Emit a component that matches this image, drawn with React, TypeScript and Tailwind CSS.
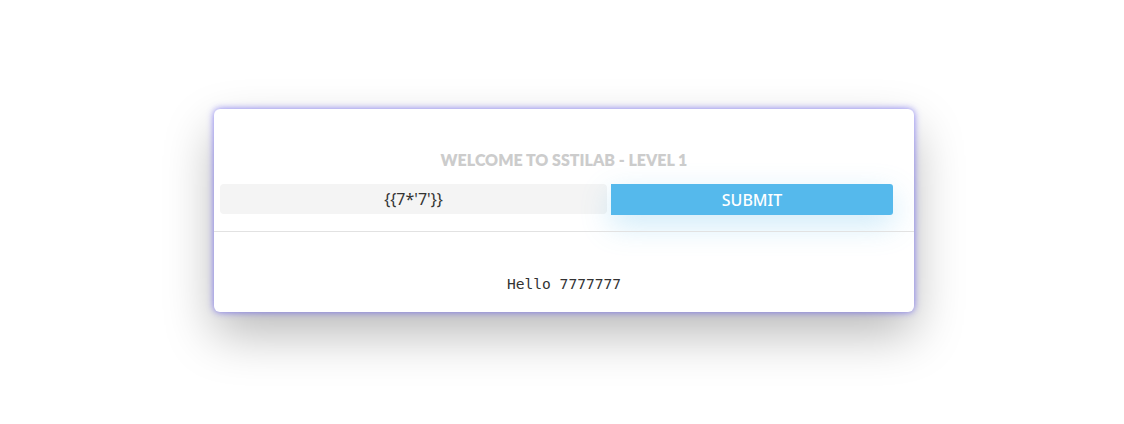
import React, { useState } from 'react';

const App: React.FC = () => {
  const [payload, setPayload] = useState("{{7*'7'}}");

  return (
    <div className="w-[1124px] h-[424px] bg-white flex justify-center pt-[109px] pl-[4px]">
      <div className="w-[700px] h-[203px] bg-white rounded-md shadow-[0_0_7px_rgba(100,90,240,0.8),0_22px_50px_rgba(0,0,0,0.28)] flex flex-col">
        <h1 className="mt-[41px] text-center text-[16px] leading-5 font-extrabold text-[#cccccc] font-['Lato','Noto_Sans',sans-serif]">
          WELCOME TO SSTILAB - LEVEL 1
        </h1>
        <form
          className="mt-[14px] ml-[6px] mr-[21px] flex gap-[4px] h-[31px]"
          onSubmit={(e) => e.preventDefault()}
        >
          <input
            value={payload}
            onChange={(e) => setPayload(e.target.value)}
            className="w-[387px] h-[30px] bg-[#f4f4f4] rounded-sm text-center text-[16px] text-[#333] font-['Noto_Sans',sans-serif] outline-none"
          />
          <button
            type="submit"
            className="flex-1 h-[31px] bg-[#55b9ec] rounded-r-[3px] text-white text-[16px] font-medium font-['Noto_Sans',sans-serif] shadow-[0_10px_30px_rgba(85,185,236,0.3)]"
          >
            SUBMIT
          </button>
        </form>
        <div className="mt-[16px] border-t border-[#e2e2e2]" />
        <div className="mt-[42px] text-center text-[14.6px] leading-5 text-[#333] font-['DejaVu_Sans_Mono',monospace]">
          Hello 7777777
        </div>
      </div>
    </div>
  );
};

export default App;
